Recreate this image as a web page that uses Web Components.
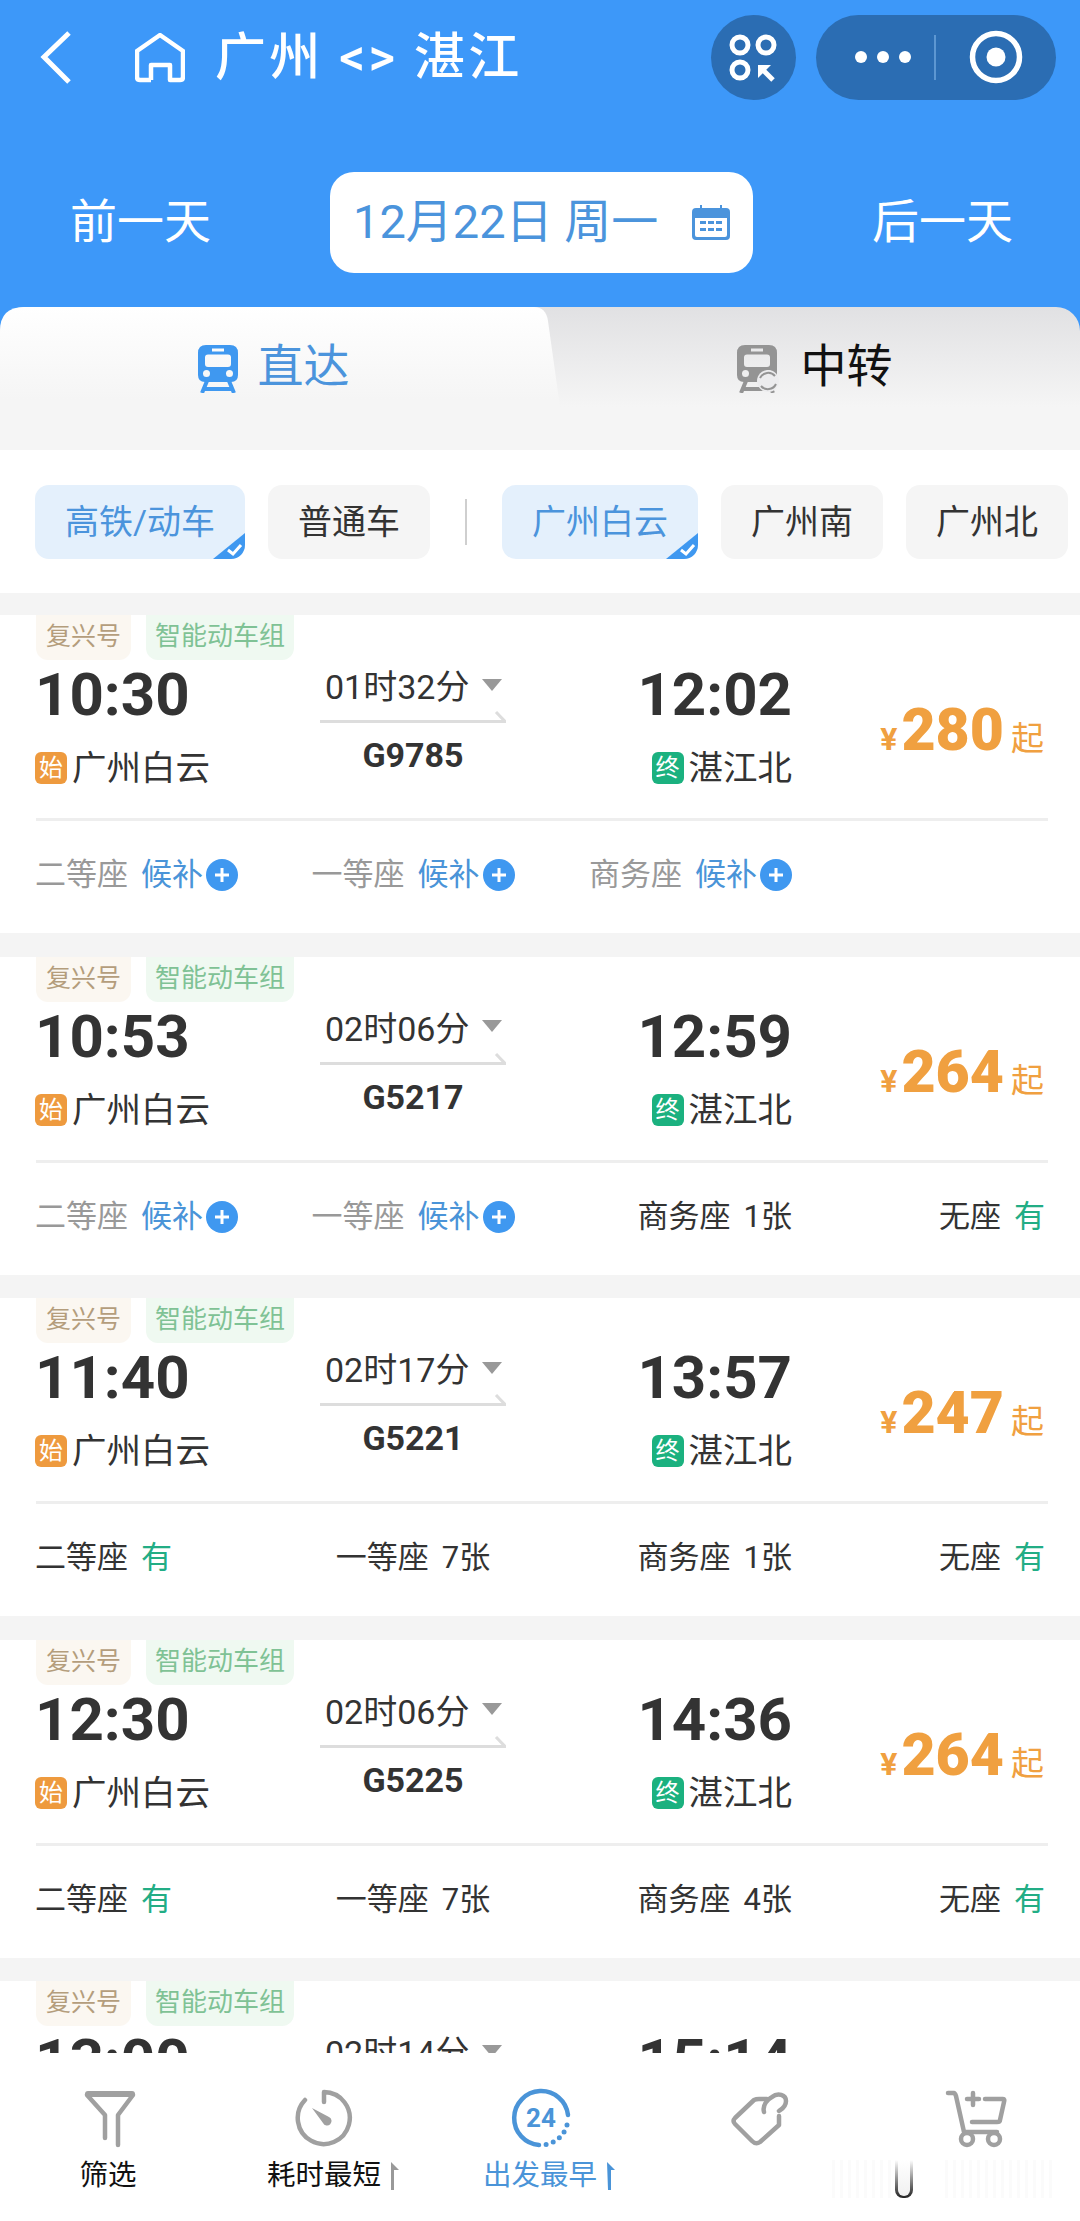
<!DOCTYPE html>
<html lang="zh">
<head>
<meta charset="utf-8">
<title>广州 &lt;&gt; 湛江</title>
<style>
    html, body { margin: 0; padding: 0; background: #f4f4f4; }
    body { font-family: Roboto, "Noto Sans CJK SC", sans-serif; color: #333; }
</style>
</head>
<body>

<train-page>
    <top-bar slot="top" title="广州 <> 湛江"></top-bar>
    <day-bar slot="top" date="12月22日 周一"></day-bar>
    <mode-tabs slot="top"></mode-tabs>
    <filter-row slot="top">
        <filter-chip selected>高铁/动车</filter-chip>
        <filter-chip>普通车</filter-chip>
        <filter-chip slot="after" selected>广州白云</filter-chip>
        <filter-chip slot="after">广州南</filter-chip>
        <filter-chip slot="after">广州北</filter-chip>
    </filter-row>

    <train-card dep="10:30" arr="12:02" dur="01时32分" num="G9785" price="280">
        <train-seat label="二等座" wait></train-seat>
        <train-seat label="一等座" wait align="center"></train-seat>
        <train-seat label="商务座" wait align="end"></train-seat>
    </train-card>
    <train-card dep="10:53" arr="12:59" dur="02时06分" num="G5217" price="264">
        <train-seat label="二等座" wait></train-seat>
        <train-seat label="一等座" wait align="center"></train-seat>
        <train-seat label="商务座" left="1张" align="end"></train-seat>
        <train-seat label="无座" left="有" ok align="end"></train-seat>
    </train-card>
    <train-card dep="11:40" arr="13:57" dur="02时17分" num="G5221" price="247">
        <train-seat label="二等座" left="有" ok></train-seat>
        <train-seat label="一等座" left="7张" align="center"></train-seat>
        <train-seat label="商务座" left="1张" align="end"></train-seat>
        <train-seat label="无座" left="有" ok align="end"></train-seat>
    </train-card>
    <train-card dep="12:30" arr="14:36" dur="02时06分" num="G5225" price="264">
        <train-seat label="二等座" left="有" ok></train-seat>
        <train-seat label="一等座" left="7张" align="center"></train-seat>
        <train-seat label="商务座" left="4张" align="end"></train-seat>
        <train-seat label="无座" left="有" ok align="end"></train-seat>
    </train-card>
    <train-card dep="13:00" arr="15:14" dur="02时14分"></train-card>

    <sort-bar slot="bottom"></sort-bar>
</train-page>

<script>
(() => {

    // every element is a shadow root filled from a template string
    const define = (name, html, Base = HTMLElement) => {
        const template = document.createElement('template');
        template.innerHTML = html;
        window.customElements.define(name, class extends Base {
            constructor() {
                super();
                this.attachShadow({mode: 'open'});
                this.shadowRoot.appendChild(template.content.cloneNode(true));
            }
            connectedCallback() {
                if (this.render) this.render();
            }
        });
    };

    const TRAIN_ICON = `
        <path fill-rule="evenodd" d="M9 0H33Q41 0 41 8V30Q41 37 34 37H8Q1 37 1 30V8Q1 0 9 0ZM15 3.500V6.500H27V3.500ZM11 9.500Q8 9.500 8 12.500V19Q8 22 11 22H31Q34 22 34 19V12.500Q34 9.500 31 9.500ZM9.500 25A3.500 3.500 0 1 0 9.500 32A3.500 3.500 0 1 0 9.500 25ZM32.500 25A3.500 3.500 0 1 0 32.500 32A3.500 3.500 0 1 0 32.500 25Z"/>
        <path fill="none" stroke="currentColor" stroke-width="4" d="M10 36L5 48M32 36L37 48M7 44H35"/>`;

    define('train-page', `
        <style>
            :host { display: flex; flex-direction: column; height: 2221px; overflow: hidden; }
            .list { flex: 1; min-height: 0; overflow: hidden; background: #f4f4f4; }
            .top { display: block; background: #3d98f9; }
        </style>
        <div class="top"><slot name="top"></slot></div>
        <div class="list"><slot></slot></div>
        <slot name="bottom"></slot>
    `);

    define('top-bar', `
        <style>
            :host { display: flex; align-items: center; height: 85px; padding: 15px 24px 15px 40px; color: #fff; }
            .back { width: 31px; height: 53px; margin-right: 64px; }
            .home { width: 50px; height: 50px; margin-right: 30px; }
            h1 { flex: 1; margin: 0; font: 500 51px/85px Roboto, "Noto Sans CJK SC", sans-serif; letter-spacing: 3.200px; white-space: pre; }
            .round { width: 85px; height: 85px; border-radius: 50%; background: #2b6db3; margin-right: 20px; }
            .pill { width: 240px; height: 85px; border-radius: 43px; background: #2b6db3; }
            svg { display: block; }
        </style>
        <svg class="back" viewBox="0 0 31 53" fill="none" stroke="#fff" stroke-width="5"><path d="M29 2L4 26L29 51"/></svg>
        <svg class="home" viewBox="0 0 50 50" fill="none" stroke="#fff" stroke-width="4.500" stroke-linejoin="round"><path d="M16 47H5Q2 47 2 44V18L25 2L48 18V44Q48 47 45 47H35V32H16V47"/></svg>
        <h1></h1>
        <svg class="round" viewBox="0 0 85 85">
            <g fill="none" stroke="#fff" stroke-width="5"><circle cx="29" cy="30" r="8"/><circle cx="55" cy="30" r="8"/><circle cx="29" cy="55" r="8"/><path d="M50 53L62 65"/></g>
            <path fill="#fff" d="M47 50H60L47 63Z"/>
        </svg>
        <svg class="pill" viewBox="0 0 240 85">
            <g fill="#fff"><circle cx="45" cy="42" r="6"/><circle cx="67" cy="42" r="6"/><circle cx="89" cy="42" r="6"/><circle cx="180" cy="42" r="9.500"/></g>
            <path stroke="#6fa6dc" stroke-width="1.500" d="M119 20V65"/>
            <circle cx="180" cy="42" r="23.500" fill="none" stroke="#fff" stroke-width="5.500"/>
        </svg>
    `, class extends HTMLElement {
        render() {
            this.shadowRoot.querySelector('h1').textContent = this.getAttribute('title');
        }
    });

    define('day-bar', `
        <style>
            :host { display: flex; align-items: center; justify-content: space-between; padding: 57px 67px 34px 70px; font-size: 47px; color: #fff; }
            span { padding-bottom: 10px; }
            .date { display: flex; align-items: center; box-sizing: border-box; width: 423px; height: 101px; padding: 0 23px; border-radius: 24px; background: #fff; color: #4b94dc; white-space: pre; }
            svg { display: block; width: 38px; height: 36px; margin-left: auto; }
        </style>
        <span>前一天</span>
        <div class="date"><span id="date"></span>
            <svg viewBox="0 0 38 36" fill="#4b94dc">
                <path fill-rule="evenodd" d="M4 3H34Q38 3 38 7V31Q38 35 34 35H4Q0 35 0 31V7Q0 3 4 3ZM3 13V30Q3 32 5 32H33Q35 32 35 30V13Z"/>
                <path d="M8 0h2v5H8zM28 0h2v5h-2zM8 16h6v3H8zM16 16h6v3h-6zM24 16h6v3h-6zM8 23h6v3H8zM16 23h6v3h-6zM24 23h6v3h-6z"/>
            </svg>
        </div>
        <span>后一天</span>
    `, class extends HTMLElement {
        render() {
            this.shadowRoot.querySelector('#date').textContent = this.getAttribute('date');
        }
    });

    define('mode-tabs', `
        <style>
            :host { display: flex; height: 143px; border-radius: 24px 24px 0 0; background: linear-gradient(#e1e1e3, #f5f5f5 70%); font-size: 46px; }
            div { display: flex; align-items: flex-start; justify-content: center; box-sizing: border-box; height: 143px; padding-top: 30px; line-height: 58px; }
            .on { flex: 0 0 566px; padding-right: 20px; color: #4b94dc; background: linear-gradient(#fff, #f5f5f5 65%);
                  clip-path: path("M0 143V24Q0 0 24 0H534Q546 0 548 14L566 143Z"); }
            .off { flex: 1; padding-right: 18px; color: #111; }
            svg { display: block; width: 42px; height: 48px; margin: 8px 19px 0 0; }
        </style>
        <div class="on"><svg viewBox="0 0 42 48" fill="#3f98f0" color="#3f98f0">${TRAIN_ICON}</svg>直达</div>
        <div class="off">
            <svg viewBox="0 0 46 48" fill="#949494" color="#949494" style="width:46px">${TRAIN_ICON}
                <circle cx="32" cy="36" r="11" fill="#ececee"/>
                <path fill="none" stroke="#949494" stroke-width="2" d="M24 33A9 9 0 0 1 39 31M40 39A9 9 0 0 1 25 41"/>
            </svg>中转
        </div>
    `);

    define('filter-row', `
        <style>
            :host { display: flex; align-items: center; gap: 23px; height: 143px; box-sizing: content-box; padding: 0 0 0 35px; border-bottom: 22px solid #f4f4f4; background: #fff; }
            .group { display: flex; align-items: center; gap: 23px; }
            .line { width: 2px; height: 46px; margin: 0 12px; background: #cfcfcf; }
        </style>
        <div class="group"><slot></slot></div>
        <div class="line"></div>
        <div class="group"><slot name="after"></slot></div>
    `);

    define('filter-chip', `
        <style>
            :host { display: block; position: relative; height: 74px; padding: 0 30px; border-radius: 14px; overflow: hidden; background: #f5f5f5; color: #333; font-size: 34px; line-height: 74px; white-space: nowrap; }
            :host([selected]) { background: #e4f0fc; color: #4b94dc; }
            svg { display: none; position: absolute; right: 0; bottom: 0; width: 32px; height: 26px; }
            :host([selected]) svg { display: block; }
        </style>
        <slot></slot>
        <svg viewBox="0 0 32 26"><path fill="#3f98f0" d="M32 0V26H0Z"/><path fill="none" stroke="#fff" stroke-width="3" d="M15 17L20 21L28 12"/></svg>
    `);

    define('train-card', `
        <style>
            :host { display: block; box-sizing: border-box; height: 318px; margin-bottom: 23.500px; background: #fff; overflow: hidden; }
            .tags { display: flex; gap: 15px; height: 45px; padding-left: 36px; line-height: 43px; }
            .tags span { border-radius: 0 0 12px 12px; }
            .tags .a { padding: 0 10px; font-size: 25px; background: #fbf7f1; color: #b49d7c; }
            .tags .b { padding: 0 9px; font-size: 26px; background: #eff9f1; color: #7fc295; }
            .main { display: grid; grid-template-columns: 284px 186px 287px 252px; height: 158px; padding-left: 35px; }
            .main > div { min-width: 0; }
            .time { font-size: 60px; font-weight: 700; line-height: 70px; color: #333; }
            .arr { display: flex; flex-direction: column; align-items: flex-end; }
            .station { display: flex; align-items: center; gap: 5px; margin-top: 18px; font-size: 34.500px; line-height: 40px; }
            .station b { width: 32px; height: 32px; border-radius: 6px; font-weight: 400; font-size: 24px; line-height: 32px; text-align: center; color: #fff; background: #ee9a3e; }
            .arr b { background: #1bb17f; }
            .dur { display: flex; align-items: center; gap: 13px; height: 49px; padding-left: 6px; font-size: 34px; white-space: nowrap; }
            .dur svg { width: 20px; height: 12px; }
            .way { display: block; width: 186px; height: 14px; margin-left: 1px; }
            .num { margin-top: 12px; padding-left: 2px; font-size: 34px; font-weight: 700; line-height: 40px; text-align: center; }
            .price { display: flex; align-items: baseline; justify-content: flex-end; padding-top: 35px; color: #f0a040; font-weight: 700; }
            .price i { font-style: normal; font-size: 32px; margin-right: 4px; }
            .price strong { font-size: 59px; line-height: 70px; }
            .price em { font-style: normal; font-weight: 400; font-size: 33px; margin-left: 7px; }
            .rule { height: 3px; margin: 0 32px 0 36px; background: #eee; }
            .seats { display: grid; grid-template-columns: 205px 346px 206px 253px; align-items: center; height: 108px; padding-left: 35px; }
        </style>
        <div class="tags"><span class="a">复兴号</span><span class="b">智能动车组</span></div>
        <div class="main">
            <div>
                <div class="time" id="dep"></div>
                <div class="station" id="from"></div>
            </div>
            <div>
                <div class="dur"><span id="dur"></span><svg viewBox="0 0 20 12"><path fill="#999" d="M0 0H20L10 12Z"/></svg></div>
                <div id="rest"></div>
            </div>
            <div class="arr">
                <div class="time" id="arr"></div>
                <div class="station" id="to"></div>
            </div>
            <div id="price"></div>
        </div>
        <div class="rule"></div>
        <div class="seats"><slot></slot></div>
    `, class extends HTMLElement {
        render() {
            const $ = (id) => this.shadowRoot.querySelector('#' + id);
            $('dep').textContent = this.getAttribute('dep');
            $('arr').textContent = this.getAttribute('arr');
            $('dur').textContent = this.getAttribute('dur');
            // the last card is cut off by the bottom bar, its lower half never shows
            if (!this.hasAttribute('num')) return;
            $('from').innerHTML = '<b>始</b>广州白云';
            $('to').innerHTML = '<b>终</b>湛江北';
            $('rest').innerHTML = `
                <svg class="way" viewBox="0 0 186 14" fill="none" stroke="#ddd" stroke-width="3"><path d="M0 12.500H185L176 3"/></svg>
                <div class="num">${this.getAttribute('num')}</div>`;
            $('price').className = 'price';
            $('price').innerHTML = `<i>¥</i><strong>${this.getAttribute('price')}</strong><em>起</em>`;
        }
    });

    define('train-seat', `
        <style>
            :host { display: flex; align-items: center; font-size: 31px; line-height: 40px; color: #333; white-space: nowrap; }
            :host([align="center"]) { justify-content: center; }
            :host([align="end"]) { justify-content: flex-end; }
            :host([wait]) { color: #999; }
            #left { margin-left: 13px; }
            #left.wait { color: #4a94d8; }
            #left.ok { color: #22ad85; }
            svg { display: none; width: 32px; height: 32px; margin-left: 3px; }
            :host([wait]) svg { display: block; }
        </style>
        <span id="label"></span><span id="left"></span>
        <svg viewBox="0 0 32 32"><circle cx="16" cy="16" r="16" fill="#3f98f0"/><path stroke="#fff" stroke-width="3" d="M9 16H23M16 9V23"/></svg>
    `, class extends HTMLElement {
        render() {
            const left = this.shadowRoot.querySelector('#left');
            this.shadowRoot.querySelector('#label').textContent = this.getAttribute('label');
            if (this.hasAttribute('wait')) {
                left.textContent = '候补';
                left.className = 'wait';
            } else {
                left.textContent = this.getAttribute('left');
                left.className = this.hasAttribute('ok') ? 'ok' : '';
            }
        }
    });

    define('sort-bar', `
        <style>
            :host { display: grid; grid-template-columns: repeat(5, 1fr); position: relative; height: 168px; box-sizing: border-box; padding-top: 35px; background: #fff; }
            div { display: flex; flex-direction: column; align-items: center; font-size: 28.500px; color: #111; }
            .ico { display: block; height: 60px; fill: none; stroke: #a0a0a0; stroke-width: 4.500; stroke-linecap: round; stroke-linejoin: round; }
            p { display: flex; align-items: center; height: 40px; margin: 8px 0 0; white-space: nowrap; line-height: 40px; }
            .up { display: block; width: 8px; height: 28px; margin-left: 10px; margin-right: -18px; fill: #999; }
            .active { color: #4a94d8; }
            .active .ico { stroke: #4a94d8; }
            .active .up { fill: #4a94d8; }
            .mark { position: absolute; top: 107px; height: 38px; background: repeating-linear-gradient(90deg, #fbfbfb 0 3px, #fff 3px 8px); }
            .bar { position: absolute; left: 895px; top: 107px; width: 18px; height: 38px; border-radius: 0 0 8px 8px; background: linear-gradient(rgba(30,30,30,0), #222); }
            .bar i { position: absolute; left: 3px; right: 3px; top: 0; bottom: 2px; border-radius: 0 0 6px 6px; background: linear-gradient(#fff, #f0f0f0); }
        </style>
        <div>
            <svg class="ico" width="60" viewBox="0 0 60 60" style="margin-left:3px"><path stroke-width="6" d="M8 6H52"/><path d="M7 7L25 27V50M53 7L38 27V57"/></svg>
            <p>筛选</p>
        </div>
        <div>
            <svg class="ico" width="60" viewBox="0 0 60 60" style="margin-left:2px"><path d="M29 14V4A26 26 0 1 1 10 12"/><path fill="#a0a0a0" stroke="none" d="M17 20L34 29A4.500 4.500 0 1 1 28 35Z"/></svg>
            <p>耗时最短<svg class="up" viewBox="0 0 8 28"><path d="M0 0L8 8H3V28H0Z"/></svg></p>
        </div>
        <div class="active">
            <svg class="ico" width="60" viewBox="0 0 60 60" style="margin-left:2px">
                <path d="M28 57A27 27 0 1 1 57 27"/>
                <path stroke-width="5" stroke-dasharray="0 7.500" d="M56 37A27 27 0 0 1 35 56.500"/>
                <text x="30" y="39" text-anchor="middle" font-family="Roboto" font-weight="700" font-size="26" fill="#4a94d8" stroke="none">24</text>
            </svg>
            <p>出发最早<svg class="up" viewBox="0 0 8 28"><path d="M0 0L8 8H4V28H1Z"/></svg></p>
        </div>
        <div>
            <svg class="ico" width="66" viewBox="0 0 66 60" style="margin-left:6px"><path d="M53 28V37L34 54Q30 57 26 53L9 36Q6 33 9 30L28 12Q30 11 33 11H41"/><path d="M38 24C36 17 42 11 46 9C52 4 60 7 60 13C60 19 56 21 53 23"/></svg>
        </div>
        <div>
            <svg class="ico" width="72" viewBox="0 0 72 60" style="margin-left:11px"><path d="M6 5H12Q13 5 14 8L22 44H55"/><circle cx="25" cy="51" r="6"/><circle cx="52" cy="51" r="6"/><path d="M31 5V17M25 11H37"/><path d="M43 11H61Q63 11 62 14L58 32Q58 34 55 34H30"/></svg>
        </div>
        <span class="mark" style="left:832px;width:60px"></span>
        <span class="mark" style="left:945px;width:110px"></span>
        <span class="bar"><i></i></span>
    `);

})();
</script>
</body>
</html>
